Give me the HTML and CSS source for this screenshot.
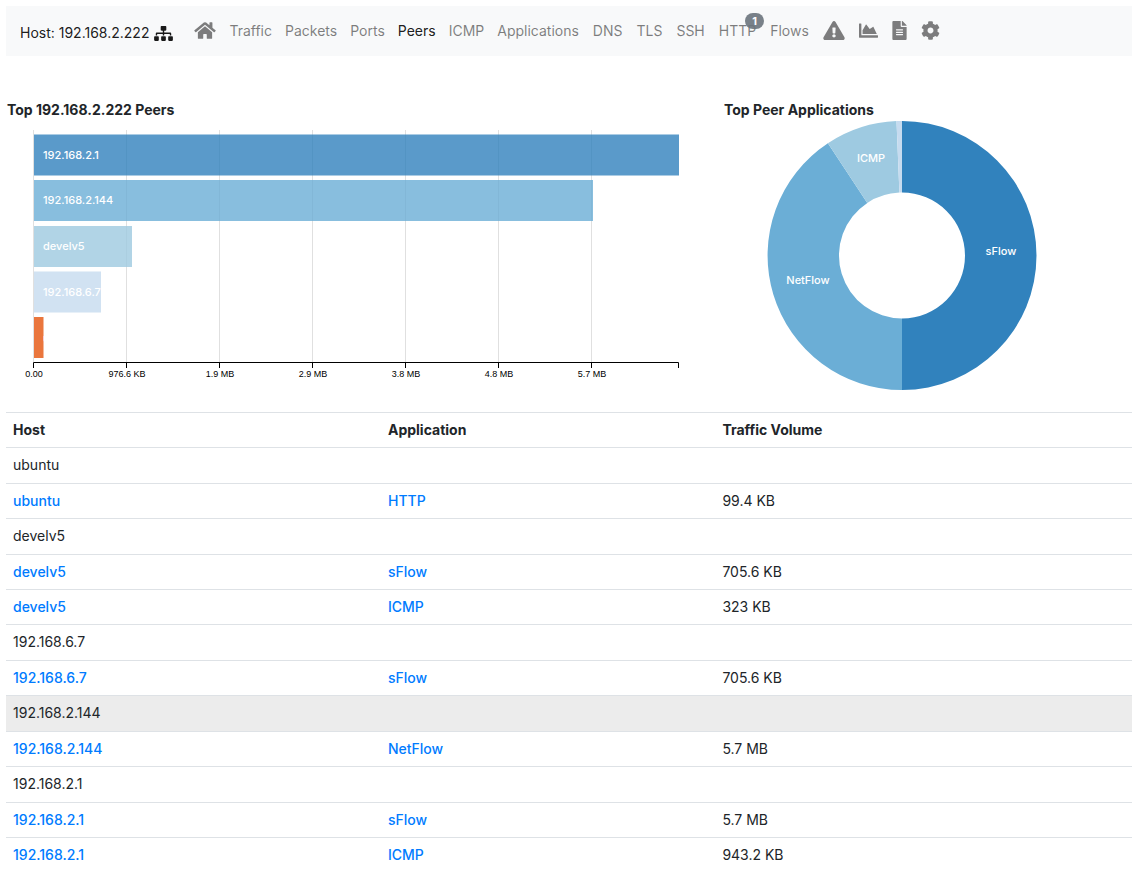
FILE: index.html
```html
<!DOCTYPE html>
<html lang="en">
<head>
<meta charset="utf-8">
<title>Host 192.168.2.222 - Peers</title>
<meta name="viewport" content="width=device-width, initial-scale=1">
<link rel="stylesheet" href="styles.css">
</head>
<body>
<nav class="navbar">
  <div class="brand">Host: 192.168.2.222
    <svg class="icon-small" viewBox="0 0 640 512" aria-hidden="true"><path d="M128 352H32c-17.67 0-32 14.33-32 32v96c0 17.67 14.33 32 32 32h96c17.67 0 32-14.33 32-32v-96c0-17.67-14.33-32-32-32zm-24-80h192v48h48v-48h192v48h48v-57.59c0-21.17-17.23-38.41-38.41-38.41H344v-64h40c17.67 0 32-14.33 32-32V32c0-17.67-14.33-32-32-32H256c-17.67 0-32 14.33-32 32v96c0 17.67 14.33 32 32 32h40v64H94.41C73.23 224 56 241.23 56 262.41V320h48v-48zm264 80h-96c-17.67 0-32 14.33-32 32v96c0 17.67 14.33 32 32 32h96c17.67 0 32-14.33 32-32v-96c0-17.67-14.33-32-32-32zm240 0h-96c-17.67 0-32 14.33-32 32v96c0 17.67 14.33 32 32 32h96c17.67 0 32-14.33 32-32v-96c0-17.67-14.33-32-32-32z"/></svg>
  </div>
  <div class="nav-groups">
  <ul class="nav-list nav-general">
    <li><a href="#" aria-label="Home"><svg class="icon icon-wide" viewBox="0 0 576 512" aria-hidden="true"><path d="M280.37 148.26L96 300.11V464a16 16 0 0 0 16 16l112.06-.29a16 16 0 0 0 15.92-16V368a16 16 0 0 1 16-16h64a16 16 0 0 1 16 16v95.64a16 16 0 0 0 16 16.05L464 480a16 16 0 0 0 16-16V300L295.67 148.26a12.19 12.19 0 0 0-15.3 0zM571.6 251.47L488 182.56V44.05a12 12 0 0 0-12-12h-56a12 12 0 0 0-12 12v72.61L318.47 43a48 48 0 0 0-61 0L4.34 251.47a12 12 0 0 0-1.6 16.9l25.5 31A12 12 0 0 0 45.15 301l235.22-193.74a12.19 12.19 0 0 1 15.3 0L530.9 301a12 12 0 0 0 16.9-1.6l25.5-31a12 12 0 0 0-1.7-16.93z"/></svg></a></li>
    <li><a href="#">Traffic</a></li>
    <li><a href="#">Packets</a></li>
    <li><a href="#">Ports</a></li>
    <li><a href="#" class="active" aria-current="page">Peers</a></li>
    <li><a href="#">ICMP</a></li>
    <li><a href="#">Applications</a></li>
  </ul>
  <ul class="nav-list">
    <li><a href="#">DNS</a></li>
    <li><a href="#">TLS</a></li>
    <li><a href="#">SSH</a></li>
    <li><a href="#">HTTP<span class="badge">1</span></a></li>
    <li><a href="#">Flows</a></li>
  </ul>
  <ul class="nav-list">
    <li><a href="#" aria-label="Alerts"><svg class="icon icon-wide" viewBox="0 0 576 512" aria-hidden="true"><path d="M569.517 440.013C587.975 472.007 564.806 512 527.94 512H48.054c-36.937 0-59.999-40.055-41.577-71.987L246.423 23.985c18.467-32.009 64.72-31.951 83.154 0l239.94 416.028zM288 354c-25.405 0-46 20.595-46 46s20.595 46 46 46 46-20.595 46-46-20.595-46-46-46zm-43.673-165.346l7.418 136c.347 6.364 5.609 11.346 11.982 11.346h48.546c6.373 0 11.635-4.982 11.982-11.346l7.418-136c.375-6.874-5.098-12.654-11.982-12.654h-63.383c-6.884 0-12.356 5.78-11.981 12.654z"/></svg></a></li>
    <li><a href="#" aria-label="Charts"><svg class="icon" viewBox="0 0 512 512" aria-hidden="true"><path d="M500 384c6.6 0 12 5.4 12 12v40c0 6.6-5.4 12-12 12H12c-6.6 0-12-5.4-12-12V76c0-6.6 5.4-12 12-12h40c6.6 0 12 5.4 12 12v308h436zM372.7 159.5L288 216l-85.3-113.7c-5.1-6.8-15.5-6.3-19.9 1L96 248v104h384l-89.9-187.8c-3.2-6.5-11.4-8.7-17.4-4.7z"/></svg></a></li>
    <li><a href="#" aria-label="Report"><svg class="icon icon-narrow" viewBox="0 0 384 512" aria-hidden="true"><path d="M224 136V0H24C10.7 0 0 10.7 0 24v464c0 13.3 10.7 24 24 24h336c13.3 0 24-10.7 24-24V160H248c-13.2 0-24-10.8-24-24zm64 236c0 6.6-5.4 12-12 12H108c-6.6 0-12-5.4-12-12v-8c0-6.6 5.4-12 12-12h168c6.6 0 12 5.4 12 12v8zm0-64c0 6.6-5.4 12-12 12H108c-6.6 0-12-5.4-12-12v-8c0-6.6 5.4-12 12-12h168c6.6 0 12 5.4 12 12v8zm0-72v8c0 6.6-5.4 12-12 12H108c-6.6 0-12-5.4-12-12v-8c0-6.6 5.4-12 12-12h168c6.6 0 12 5.4 12 12zm96-114.1v6.1H256V0h6.1c6.4 0 12.5 2.5 17 7l97.9 98c4.5 4.5 7 10.6 7 16.9z"/></svg></a></li>
    <li><a href="#" aria-label="Settings"><svg class="icon" viewBox="0 0 512 512" aria-hidden="true"><path d="M487.4 315.7l-42.6-24.6c4.3-23.2 4.3-47 0-70.2l42.6-24.6c4.9-2.8 7.1-8.6 5.5-14-11.1-35.6-30-67.8-54.7-94.6-3.8-4.1-10-5.1-14.8-2.3L380.8 110c-17.9-15.4-38.5-27.3-60.8-35.1V25.8c0-5.6-3.9-10.5-9.4-11.7-36.7-8.2-74.3-7.8-109.2 0-5.5 1.2-9.4 6.1-9.4 11.7V75c-22.2 7.9-42.8 19.8-60.8 35.1L88.7 85.5c-4.9-2.8-11-1.9-14.8 2.3-24.7 26.7-43.6 58.9-54.7 94.6-1.7 5.4.6 11.2 5.5 14L67.3 221c-4.3 23.2-4.3 47 0 70.2l-42.6 24.6c-4.9 2.8-7.1 8.6-5.5 14 11.1 35.6 30 67.8 54.7 94.6 3.8 4.1 10 5.1 14.8 2.3l42.6-24.6c17.9 15.4 38.5 27.3 60.8 35.1v49.2c0 5.6 3.9 10.5 9.4 11.7 36.7 8.2 74.3 7.8 109.2 0 5.5-1.2 9.4-6.1 9.4-11.7v-49.2c22.2-7.9 42.8-19.8 60.8-35.1l42.6 24.6c4.9 2.8 11 1.9 14.8-2.3 24.7-26.7 43.6-58.9 54.7-94.6 1.5-5.5-.7-11.3-5.6-14.1zM256 336c-44.1 0-80-35.9-80-80s35.9-80 80-80 80 35.9 80 80-35.9 80-80 80z"/></svg></a></li>
  </ul>
  </div>
</nav>

<main>
  <div class="charts">
    <section>
      <h2 class="chart-title">Top 192.168.2.222 Peers</h2>
      <svg class="chart" viewBox="0 0 717 270" role="img" aria-label="Traffic by peer">
        <path class="gridline" d="M27.5 9V241M120.5 9V241M213.5 9V241M306.5 9V241M399.5 9V241M492.5 9V241M585.5 9V241"/>
        <g class="bars">
          <rect x="28" y="13.5" width="645" height="41" fill="#3182bd"/>
          <rect x="28" y="59" width="559" height="41" fill="#6baed6"/>
          <rect x="28" y="105" width="98" height="41" fill="#9ecae1"/>
          <rect x="28" y="150.5" width="67" height="41" fill="#c6dbef"/>
          <rect x="28" y="196" width="9.5" height="41" fill="#e6550d"/>
        </g>
        <g class="label">
          <text x="37" y="38">192.168.2.1</text>
          <text x="37" y="83">192.168.2.144</text>
          <text x="37" y="129">develv5</text>
          <text x="37" y="175">192.168.6.7</text>
          <text x="37" y="221">ubuntu</text>
        </g>
        <path class="axis" d="M27.5 247V241.5H672.5V247M120.5 241.5V247M213.5 241.5V247M306.5 241.5V247M399.5 241.5V247M492.5 241.5V247M585.5 241.5V247"/>
        <g class="tick">
          <text x="28" y="256">0.00</text>
          <text x="121" y="256">976.6 KB</text>
          <text x="214" y="256">1.9 MB</text>
          <text x="307" y="256">2.9 MB</text>
          <text x="400" y="256">3.8 MB</text>
          <text x="493" y="256">4.8 MB</text>
          <text x="586" y="256">5.7 MB</text>
        </g>
      </svg>
    </section>
    <section>
      <h2 class="chart-title">Top Peer Applications</h2>
      <svg class="chart" viewBox="0 0 409 270" role="img" aria-label="Traffic by application">
        <g transform="translate(179 134.5)">
          <path fill="#3182bd" d="M0-134.5A134.5 134.5 0 0 1 0 134.5V63A63 63 0 0 0 0-63z"/>
          <path fill="#6baed6" d="M0 134.5A134.5 134.5 0 0 1-74.1-112.2L-34.7-52.6A63 63 0 0 0 0 63z"/>
          <path fill="#9ecae1" d="M-74.1-112.2A134.5 134.5 0 0 1-5.5-134.4L-2.6-62.9A63 63 0 0 0-34.7-52.6z"/>
          <path fill="#c6dbef" d="M-5.5-134.4A134.5 134.5 0 0 1 0-134.5V-63A63 63 0 0 0-2.6-62.9z"/>
        </g>
        <g class="label label-center">
          <text x="278" y="134">sFlow</text>
          <text x="85" y="163">NetFlow</text>
          <text x="148" y="41">ICMP</text>
        </g>
      </svg>
    </section>
  </div>

  <table class="peers">
    <thead>
      <tr><th scope="col" class="col-host">Host</th><th scope="col" class="col-app">Application</th><th scope="col">Traffic Volume</th></tr>
    </thead>
    <tbody>
      <tr class="group"><td colspan="3">ubuntu</td></tr>
      <tr><td><a href="#">ubuntu</a></td><td><a href="#">HTTP</a></td><td>99.4 KB</td></tr>
      <tr class="group"><td colspan="3">develv5</td></tr>
      <tr><td><a href="#">develv5</a></td><td><a href="#">sFlow</a></td><td>705.6 KB</td></tr>
      <tr><td><a href="#">develv5</a></td><td><a href="#">ICMP</a></td><td>323 KB</td></tr>
      <tr class="group"><td colspan="3">192.168.6.7</td></tr>
      <tr><td><a href="#">192.168.6.7</a></td><td><a href="#">sFlow</a></td><td>705.6 KB</td></tr>
      <tr class="group highlighted"><td colspan="3">192.168.2.144</td></tr>
      <tr><td><a href="#">192.168.2.144</a></td><td><a href="#">NetFlow</a></td><td>5.7 MB</td></tr>
      <tr class="group"><td colspan="3">192.168.2.1</td></tr>
      <tr><td><a href="#">192.168.2.1</a></td><td><a href="#">sFlow</a></td><td>5.7 MB</td></tr>
      <tr><td><a href="#">192.168.2.1</a></td><td><a href="#">ICMP</a></td><td>943.2 KB</td></tr>
    </tbody>
  </table>
</main>
</body>
</html>
```

FILE: styles.css
```css
* {
  box-sizing: border-box;
}

body {
  margin: 6px 8px 6px 6px;
  background: #fff;
  color: #212529;
  font-family: Inter, "Liberation Sans", sans-serif;
  font-size: 14px;
  line-height: 22px;
}

a {
  color: #007bff;
  text-decoration: none;
}

.navbar {
  display: flex;
  align-items: center;
  gap: 21px;
  min-height: 50px;
  padding: 0 14px;
  background: #f8f9fa;
}

.brand {
  display: flex;
  align-items: center;
  gap: 5px;
  padding-top: 4px;
  color: rgba(0, 0, 0, 0.9);
  white-space: nowrap;
}

.nav-groups,
.nav-list {
  display: flex;
  flex-wrap: wrap;
  align-items: center;
  gap: 14px;
}

.nav-list {
  margin: 0;
  padding: 0;
  list-style: none;
}

.nav-general {
  gap: 13px;
}

.nav-list a {
  position: relative;
  display: block;
  color: rgba(0, 0, 0, 0.5);
}

.nav-list .active {
  color: rgba(0, 0, 0, 0.9);
}

.icon,
.icon-small {
  display: block;
  fill: currentColor;
}

.icon {
  width: 19px;
  height: 19px;
  margin-bottom: 2px;
}

.icon-wide {
  width: 22px;
}

.icon-narrow {
  width: 15px;
}

.icon-small {
  width: 19px;
  height: 15px;
}

.badge {
  position: absolute;
  top: -7px;
  right: -8px;
  width: 19px;
  border-radius: 8px;
  background: #6c757d;
  color: #fff;
  font-size: 11px;
  font-weight: 700;
  line-height: 16px;
  text-align: center;
  opacity: 0.9;
}

.charts {
  display: grid;
  grid-template-columns: 717fr 409fr;
  padding-top: 43px;
}

.chart-title {
  margin: 0;
  padding-left: 1px;
  font-size: 14px;
  font-weight: 700;
  line-height: 22px;
}

.chart {
  display: block;
  width: 100%;
  height: auto;
}

.gridline {
  stroke: #e0e0e0;
}

.bars {
  opacity: 0.8;
}

.axis {
  fill: none;
  stroke: #000;
}

.label {
  fill: #fff;
  font-size: 11px;
  font-weight: 500;
}

.label-center {
  text-anchor: middle;
}

.tick {
  font-family: "Liberation Sans", Arial, sans-serif;
  font-size: 9px;
  fill: #000;
  text-anchor: middle;
}

.peers {
  width: 100%;
  margin-top: 21px;
  border-collapse: separate;
  border-spacing: 0;
  table-layout: fixed;
}

.peers th,
.peers td {
  padding: 6px 7px;
  border-top: 1px solid #dee2e6;
  text-align: left;
}

.peers th {
  font-weight: 700;
}

.peers .group td {
  padding-bottom: 7px;
}

.peers td a {
  font-weight: 500;
}

.peers .highlighted td {
  background: #ececec;
}

.col-host {
  width: 33.3%;
}

.col-app {
  width: 29.7%;
}
```
